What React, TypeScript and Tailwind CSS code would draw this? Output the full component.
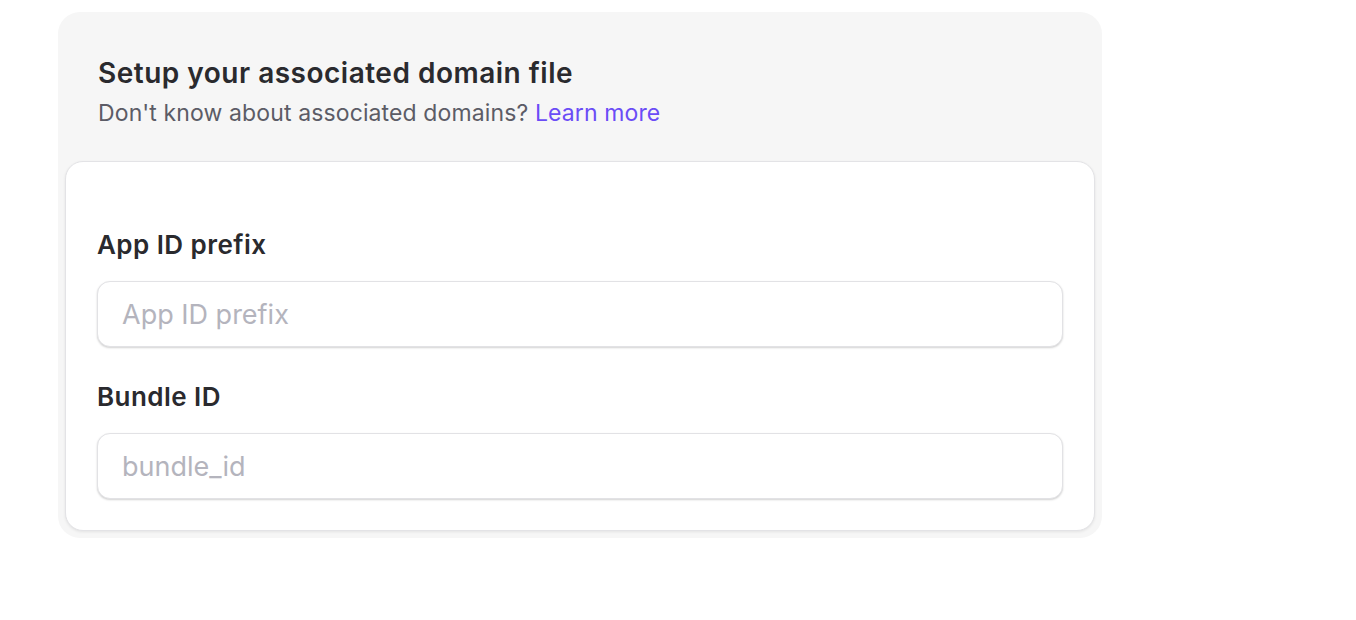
export default function App() {
  return (
    <div
      className="min-h-screen bg-white pt-3 pl-[58px]"
      style={{ fontFamily: "Inter, 'Liberation Sans', sans-serif" }}
    >
      <div className="w-[1044px] rounded-[22px] bg-[#f6f6f6] px-[7px] pb-[7px]">
        <div className="px-[33px] pt-[43px] pb-[32px]">
          <h2 className="text-[28px] font-semibold leading-[36px] text-[#2a2a2e] tracking-[0.5px]">
            Setup your associated domain file
          </h2>
          <p className="mt-[6px] text-[23px] leading-[32px] text-[#5c5c66] tracking-[0.12px]">
            Don't know about associated domains?{" "}
            <a href="#" className="text-[#6b4cf6]">
              Learn more
            </a>
          </p>
        </div>
        <div className="rounded-[18px] border border-[#e3e3e6] bg-white px-[31px] pt-[65px] pb-[31px] shadow-[0_1px_3px_rgba(0,0,0,0.08)]">
          <Field label="App ID prefix" placeholder="App ID prefix" />
          <div className="h-[32px]" />
          <Field label="Bundle ID" placeholder="bundle_id" />
        </div>
      </div>
    </div>
  );
}

function Field({ label, placeholder }: { label: string; placeholder: string }) {
  return (
    <div>
      <label className="block text-[26px] font-semibold leading-[36px] text-[#2a2a2e] tracking-[0.45px]">
        {label}
      </label>
      <input
        type="text"
        placeholder={placeholder}
        className="mt-[18px] block h-[66px] w-full rounded-[13px] border border-[#e2e2e5] bg-white px-[24px] text-[27px] text-[#2a2a2e] shadow-[0_1px_2px_rgba(0,0,0,0.18)] outline-none placeholder:text-[#b4b4bd]"
      />
    </div>
  );
}
